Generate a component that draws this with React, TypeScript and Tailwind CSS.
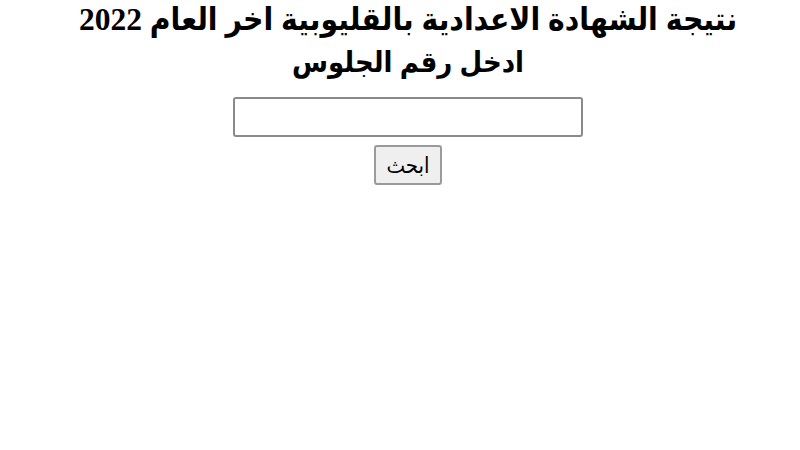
import React, { useState } from 'react';

const App: React.FC = () => {
    const [seat, setSeat] = useState('');

    return (
        <div dir="rtl" className="w-[800px] h-[450px] bg-white flex flex-col items-center pl-[16px]" style={{ fontFamily: '"Liberation Serif", "DejaVu Sans Condensed", "DejaVu Sans", serif' }}>
            <h1 className="text-[31.5px] leading-[42px] font-bold text-black text-center mt-[-1px] whitespace-nowrap">
                نتيجة الشهادة الاعدادية بالقليوبية اخر العام 2022
            </h1>
            <h2 className="text-[29px] leading-[42px] font-bold text-black text-center">
                ادخل رقم الجلوس
            </h2>
            <input
                type="text"
                value={seat}
                onChange={(e) => setSeat(e.target.value)}
                className="mt-[14px] w-[350px] h-[40px] border-2 border-[#8a8a8a] rounded-[3px] bg-white px-2 text-lg outline-none"
            />
            <button
                type="button"
                className="mt-[8px] w-[68px] h-[40px] border-2 border-[#9a9a9a] rounded-[3px] bg-[#efefef] text-[22px] text-black"
                style={{ fontFamily: '"DejaVu Sans Condensed", "DejaVu Sans", sans-serif' }}
            >
                ابحث
            </button>
        </div>
    );
};

export default App;
